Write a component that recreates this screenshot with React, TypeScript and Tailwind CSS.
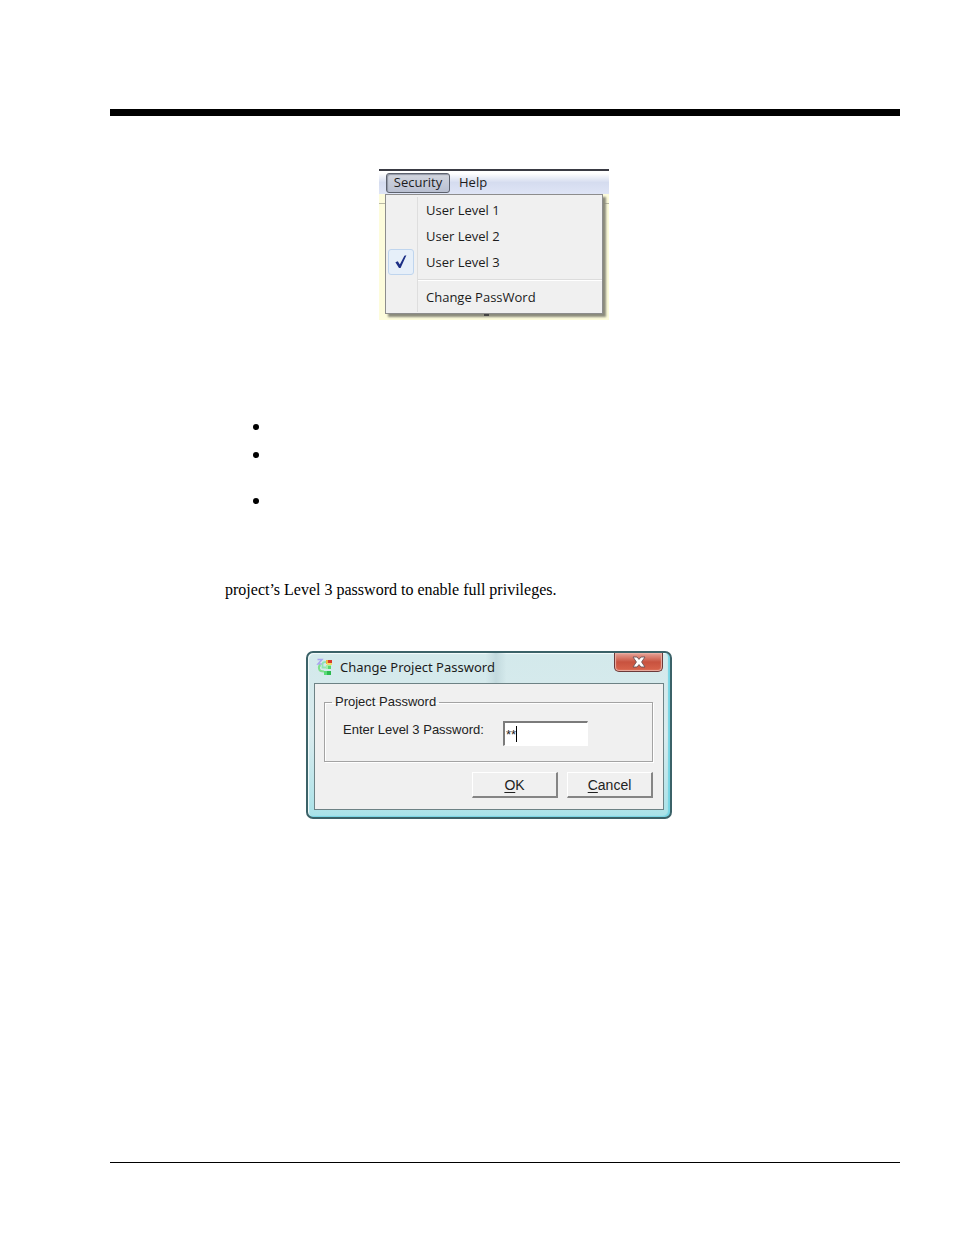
import { useState } from "react";

const levels = ["User Level 1", "User Level 2", "User Level 3"];

function CheckMark() {
  return (
    <svg viewBox="0 0 14 16" className="h-4 w-3.5" aria-hidden="true">
      <path d="M1.4 8.2 L3.8 7.2 L5.8 10.4 L10.4 1.8 L12.4 1.2 L6.6 14 L5 14 Z" fill="#1c2f86" />
    </svg>
  );
}

function ProjectIcon() {
  return (
    <svg viewBox="0 0 18 20" className="h-5 w-[18px]" aria-hidden="true">
      <path d="M1.5 2.5 H6 L2 7 H6.5" fill="none" stroke="#a9a4ee" strokeWidth="1.5" />
      <path d="M4.5 8 Q2.5 9 3 11.5 Q3.5 14.5 8 14.5" fill="none" stroke="#7ee08a" strokeWidth="2" />
      <path d="M10 5 Q6.5 5 6.5 7.5 V10.5 H11" fill="none" stroke="#8fe3b4" strokeWidth="1.8" />
      <rect x="10" y="3" width="2" height="4" fill="#f0b23a" />
      <rect x="12" y="3" width="4" height="3" fill="#d8382c" />
      <rect x="11" y="6" width="5" height="2" fill="#f0d96a" />
      <rect x="10" y="8" width="5" height="4" fill="#a2efa4" />
      <rect x="12" y="9" width="3" height="3" fill="#58d86f" />
      <rect x="8" y="14" width="7" height="4" fill="#59dc78" />
      <rect x="11" y="14" width="4" height="4" fill="#2cba4e" />
    </svg>
  );
}

function SecurityMenu() {
  const [level, setLevel] = useState(2);
  return (
    <section className="relative h-[151px] w-[230px] border-t-2 border-[#3a3b44] bg-[#fdfcdc] font-['Open_Sans','Noto_Sans',sans-serif] text-[13px] text-[#1c1c1c]">
      <nav className="flex h-[23px] items-center bg-linear-to-b from-white from-10% via-[#d5dcef] via-50% to-[#dfe5f6] pl-[7px]">
        <button className="flex h-5 w-16 items-center justify-center rounded-[3px] border border-[#5d626e] bg-linear-to-b from-[#d3d6df] to-[#b9c0d1] shadow-[inset_1px_1px_1px_#8f95a3]">
          Security
        </button>
        <button className="flex h-5 items-center px-[9px]">Help</button>
      </nav>
      <div className="border-b border-[#b9b9a4] pt-[9px]" />
      <div className="absolute top-[23px] left-[6px] w-[218px] border border-[#8d8d8d] bg-[#f0f0f0] pt-[2px] pb-[1px] shadow-[3px_3px_2px_#8b8b7c]">
        <ul>
          {levels.map((name, index) => (
            <li key={name}>
              <button onClick={() => setLevel(index)} className="flex h-[26px] w-full items-center text-left">
                <span
                  className={
                    index === level
                      ? "ml-[2px] flex h-[26px] w-[26px] items-center justify-center rounded-[3px] border border-[#bfd5ee] bg-[#e6eff9]"
                      : "ml-[2px] h-[26px] w-[26px]"
                  }
                >
                  {index === level && <CheckMark />}
                </span>
                <span className="ml-[3px] h-[26px] border-l border-[#dedede] pl-2 leading-[27px]">{name}</span>
              </button>
            </li>
          ))}
        </ul>
        <div className="ml-[31px] h-[9px] border-l border-[#dedede] pt-[4px]">
          <div className="border-t border-b border-t-[#dcdcdc] border-b-white" />
        </div>
        <button className="flex h-7 w-full items-center text-left">
          <span className="ml-[31px] h-7 border-l border-[#dedede] pl-2 leading-[27px]">Change PassWord</span>
        </button>
      </div>
      <span className="absolute right-[120px] bottom-[4px] h-[2px] w-[5px] bg-[#444]" />
    </section>
  );
}

const pushButton =
  "h-[26px] w-[86px] border-t border-l border-r-2 border-b-2 border-t-white border-l-white border-r-[#858585] border-b-[#858585] bg-[#f0f0f0] text-sm leading-5 text-[#222]";

function PasswordDialog() {
  return (
    <section
      role="dialog"
      aria-labelledby="dialog-title"
      className="w-[366px] rounded-[7px] border-2 border-[#3b6268] bg-linear-to-b from-[#d3e9eb] via-[#d9ebee] to-[#a9e2e8] px-[6px] pb-[7px] shadow-[inset_-2px_-1px_1px_#76d5e4,inset_1px_1px_1px_#f3fbfb]"
    >
      <header className="flex h-[30px] items-start justify-between bg-linear-to-r from-transparent from-49% via-[#c3dade] via-52% to-transparent to-55% pr-[1px] pl-[2px]">
        <div className="flex items-center gap-[6px] pt-[2px]">
          <ProjectIcon />
          <h1 id="dialog-title" className="font-['Noto_Sans','Open_Sans',sans-serif] text-[13px] leading-6 text-[#1c1c1c]">
            Change Project Password
          </h1>
        </div>
        <button
          aria-label="Close"
          className="flex h-[19px] w-[49px] items-center justify-center rounded-b-[5px] border border-t-0 border-[#6b3a3a] bg-linear-to-b from-[#e5a398] from-0% via-[#c8523f] via-50% to-[#d9654c] shadow-[inset_0_0_1px_1px_#eab1a6]"
        >
          <svg viewBox="0 0 14 12" className="h-3 w-3.5" aria-hidden="true">
            <path
              d="M1 1 H5 L7 3.4 L9 1 H13 L9.6 6 L13 11 H9 L7 8.6 L5 11 H1 L4.4 6 Z"
              fill="#fff"
              stroke="#6a5457"
              strokeWidth="0.9"
            />
          </svg>
        </button>
      </header>
      <form
        onSubmit={(event) => event.preventDefault()}
        className="border border-[#6d8285] bg-[#f0f0f0] pt-[9px] pr-[10px] pb-[11px] pl-[9px] font-['Liberation_Sans',Arial,sans-serif] text-[13px] text-[#222]"
      >
        <fieldset className="h-[69px] border border-[#a3a3a3] pl-[18px] shadow-[inset_1px_1px_0_#fff,1px_1px_0_#fff]">
          <legend className="-ml-[11px] px-[3px] leading-[18px]">Project Password</legend>
          <div className="flex items-center gap-[19px] pt-[9px]">
            <label htmlFor="level-password" className="pb-2">
              Enter Level 3 Password:
            </label>
            <div className="flex h-[25px] w-[85px] items-center border-t-2 border-l-2 border-r border-b border-t-[#7b7b7b] border-l-[#7b7b7b] border-r-white border-b-white bg-white">
              <input
                id="level-password"
                type="text"
                defaultValue="**"
                autoComplete="off"
                className="ml-[1px] h-5 max-w-[70px] bg-transparent outline-none [field-sizing:content]"
              />
              <span className="h-4 border-l border-black" />
            </div>
          </div>
        </fieldset>
        <div className="mt-[10px] flex justify-end gap-[9px]">
          <button type="submit" className={pushButton}>
            <u className="underline-offset-2">O</u>K
          </button>
          <button type="button" className={pushButton}>
            <u className="underline-offset-2">C</u>ancel
          </button>
        </div>
      </form>
    </section>
  );
}

export default function App() {
  return (
    <main className="flex min-h-screen flex-col bg-white pt-[109px] pr-[54px] pb-[72px] pl-[110px] font-['Liberation_Serif','Times_New_Roman',serif] text-black">
      <div className="border-t-[7px] border-black" />
      <div className="mt-[53px] ml-[269px]">
        <SecurityMenu />
      </div>
      <ul className="mt-[97px] ml-[143px] flex flex-col">
        <li className="h-7">
          <span className="mt-[7px] block h-[6px] w-[6px] rounded-full bg-black" />
        </li>
        <li className="h-[46px]">
          <span className="mt-[7px] block h-[6px] w-[6px] rounded-full bg-black" />
        </li>
        <li className="h-7">
          <span className="mt-[7px] block h-[6px] w-[6px] rounded-full bg-black" />
        </li>
      </ul>
      <p className="mt-[61px] ml-[115px] text-base leading-5">
        project’s Level 3 password to enable full privileges.
      </p>
      <div className="mt-[51px] ml-[196px]">
        <PasswordDialog />
      </div>
      <footer className="mt-auto border-t border-black" />
    </main>
  );
}
